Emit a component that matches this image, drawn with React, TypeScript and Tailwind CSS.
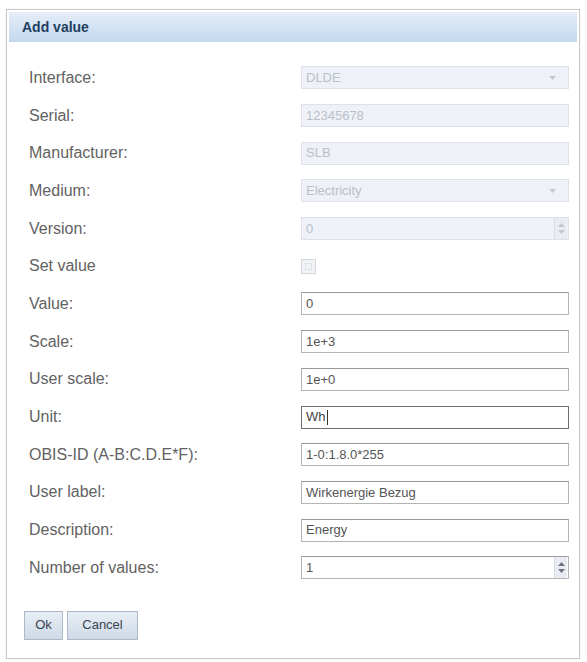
import { ReactNode } from 'react';

// Meter value editor dialog
type Field =
  | { label: string; kind: 'select'; value: string; disabled?: boolean }
  | { label: string; kind: 'text'; value: string; disabled?: boolean; focused?: boolean }
  | { label: string; kind: 'spin'; value: string; disabled?: boolean }
  | { label: string; kind: 'check'; disabled?: boolean };

const fields: Field[] = [
  { label: 'Interface:', kind: 'select', value: 'DLDE', disabled: true },
  { label: 'Serial:', kind: 'text', value: '12345678', disabled: true },
  { label: 'Manufacturer:', kind: 'text', value: 'SLB', disabled: true },
  { label: 'Medium:', kind: 'select', value: 'Electricity', disabled: true },
  { label: 'Version:', kind: 'spin', value: '0', disabled: true },
  { label: 'Set value', kind: 'check', disabled: true },
  { label: 'Value:', kind: 'text', value: '0' },
  { label: 'Scale:', kind: 'text', value: '1e+3' },
  { label: 'User scale:', kind: 'text', value: '1e+0' },
  { label: 'Unit:', kind: 'text', value: 'Wh', focused: true },
  { label: 'OBIS-ID (A-B:C.D.E*F):', kind: 'text', value: '1-0:1.8.0*255' },
  { label: 'User label:', kind: 'text', value: 'Wirkenergie Bezug' },
  { label: 'Description:', kind: 'text', value: 'Energy' },
  { label: 'Number of values:', kind: 'spin', value: '1' },
];

function Box({ disabled, focused, children }: { disabled?: boolean; focused?: boolean; children: ReactNode }) {
  const tone = disabled
    ? 'bg-[#eef2f8] border-[#dde2ea] text-[#b9c0c9]'
    : focused
      ? 'bg-white border-[#6f6f6f] text-[#444]'
      : 'bg-white border-[#b4b4b4] border-t-[#9a9a9a] text-[#555]';
  return (
    <div className={`flex h-[23px] w-[268px] items-center border px-[4px] text-[13px] ${tone}`}>
      {children}
    </div>
  );
}

function Arrow({ up, disabled }: { up?: boolean; disabled?: boolean }) {
  return (
    <svg width="7" height="4" viewBox="0 0 7 4">
      <path d={up ? 'M0 4 L3.5 0 L7 4 Z' : 'M0 0 L3.5 4 L7 0 Z'} fill={disabled ? '#c2c8d0' : '#6b7480'} />
    </svg>
  );
}

function Control({ field }: { field: Field }) {
  if (field.kind === 'check') {
    return (
      <div className="flex h-[15px] w-[15px] items-center justify-center border border-[#d3d8df] bg-[#f1f3f6]">
        <div className="h-[7px] w-[7px] border border-[#dde1e6]" />
      </div>
    );
  }
  if (field.kind === 'select') {
    return (
      <Box disabled={field.disabled}>
        <span className="flex-1">{field.value}</span>
        <span className="mr-[8px] flex">
          <Arrow disabled={field.disabled} />
        </span>
      </Box>
    );
  }
  if (field.kind === 'spin') {
    return (
      <Box disabled={field.disabled}>
        <span className="flex-1">{field.value}</span>
        <span className="-mr-[3px] flex h-full w-[13px] flex-col items-center justify-center gap-[3px] border-l border-[#d8dde4] bg-[#e9edf3]">
          <Arrow up disabled={field.disabled} />
          <Arrow disabled={field.disabled} />
        </span>
      </Box>
    );
  }
  return (
    <Box disabled={field.disabled} focused={field.focused}>
      <span>{field.value}</span>
      {field.focused && <span className="ml-[1px] h-[15px] w-px bg-[#333]" />}
    </Box>
  );
}

export default function App() {
  return (
    <div className="min-h-[662px] bg-white pl-[6px] pr-[7px] pt-[9px] font-['Liberation_Sans',Arial,sans-serif]">
      <div className="h-[650px] border border-[#c9c9c9] bg-white shadow-[0_0_2px_rgba(0,0,0,0.08)]">
        <div className="mx-[2px] mt-[2px] flex h-[30px] items-center bg-gradient-to-b from-[#e6eef8] to-[#c3d8f0] pl-[13px] text-[14px] font-bold text-[#22405f]">
          Add value
        </div>

        <div className="flex flex-col pt-[17px]">
          {fields.map(field => (
            <div key={field.label} className="flex h-[37.7px] items-center">
              <div className="w-[294px] pl-[22px] text-[16px] text-[#626262]">{field.label}</div>
              <Control field={field} />
            </div>
          ))}
        </div>

        <div className="flex gap-[4px] pl-[17px] pt-[24px]">
          <button className="h-[29px] w-[39px] border border-[#aeb9c7] bg-gradient-to-b from-[#e8eef5] to-[#cfdae7] text-[13px] text-[#3a4350]">
            Ok
          </button>
          <button className="h-[29px] w-[71px] border border-[#aeb9c7] bg-gradient-to-b from-[#e8eef5] to-[#cfdae7] text-[13px] text-[#3a4350]">
            Cancel
          </button>
        </div>
      </div>
    </div>
  );
}
